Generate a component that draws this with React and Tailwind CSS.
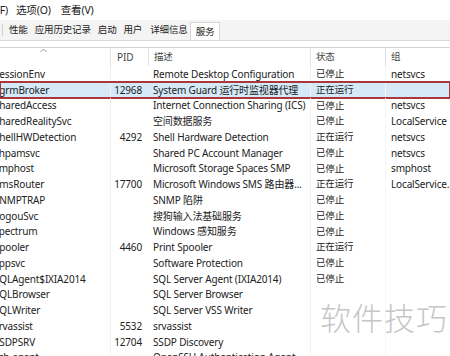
import React from "react";

const rows = [
  ["SessionEnv", "", "Remote Desktop Configuration", "已停止", "netsvcs"],
  ["SgrmBroker", "12968", "System Guard 运行时监视器代理", "正在运行", ""],
  ["SharedAccess", "", "Internet Connection Sharing (ICS)", "已停止", "netsvcs"],
  ["SharedRealitySvc", "", "空间数据服务", "已停止", "LocalService"],
  ["ShellHWDetection", "4292", "Shell Hardware Detection", "正在运行", "netsvcs"],
  ["shpamsvc", "", "Shared PC Account Manager", "已停止", "netsvcs"],
  ["smphost", "", "Microsoft Storage Spaces SMP", "已停止", "smphost"],
  ["SmsRouter", "17700", "Microsoft Windows SMS 路由器...", "正在运行", "LocalService..."],
  ["SNMPTRAP", "", "SNMP 陷阱", "已停止", ""],
  ["SogouSvc", "", "搜狗输入法基础服务", "已停止", ""],
  ["spectrum", "", "Windows 感知服务", "已停止", ""],
  ["Spooler", "4460", "Print Spooler", "正在运行", ""],
  ["sppsvc", "", "Software Protection", "已停止", ""],
  ["SQLAgent$IXIA2014", "", "SQL Server Agent (IXIA2014)", "已停止", ""],
  ["SQLBrowser", "", "SQL Server Browser", "", ""],
  ["SQLWriter", "", "SQL Server VSS Writer", "", ""],
  ["srvassist", "5532", "srvassist", "", ""],
  ["SSDPSRV", "12704", "SSDP Discovery", "", ""],
  ["ssh-agent", "", "OpenSSH Authentication Agent", "", ""],
];

const font = { fontFamily: '"Noto Sans", "Noto Sans CJK SC", sans-serif' };

export default function App() {
  return (
    <div
      className="relative w-[450px] h-[356px] overflow-hidden bg-white text-[10px] tracking-[-0.15px] text-[#222] leading-none"
      style={font}
    >
      {/* menu bar */}
      <div className="h-[20px] flex items-center overflow-hidden whitespace-nowrap text-[10.5px]">
        <span className="ml-[-24px]">文件(F)</span>
        <span className="ml-[8px]">选项(O)</span>
        <span className="ml-[10px]">查看(V)</span>
      </div>
      {/* tabs */}
      <div className="h-[21px] flex items-center bg-[#f4f4f4] border-b border-[#dadada] whitespace-nowrap text-[9.5px]">
        <span className="w-[1px] h-[12px] bg-[#d0d0d0] ml-[2px]"></span>
        <span className="ml-[6px]">性能</span>
        <span className="ml-[7px]">应用历史记录</span>
        <span className="ml-[7px]">启动</span>
        <span className="ml-[7px]">用户</span>
        <span className="ml-[8px]">详细信息</span>
        <span className="ml-[2px] h-[18px] px-[5px] flex items-center bg-white border border-b-0 border-[#d6d6d6] self-end">服务</span>
      </div>
      <div className="h-[6px]"></div>
      {/* header */}
      <div className="grid grid-cols-[110px_38px_162px_75px_65px] h-[19px] border-t border-[#d4d4d4] items-center text-[#444] text-[9.5px]">
        <div className="relative h-full">
          <svg className="absolute left-[40px] top-[0px]" width="7" height="5" viewBox="0 0 7 5">
            <path d="M0.5 4 L3.5 1 L6.5 4" fill="none" stroke="#9a9a9a" strokeWidth="1" />
          </svg>
        </div>
        <div className="h-full flex items-center pl-[6px] border-l border-[#e2e2e2] text-[10px]">PID</div>
        <div className="h-full flex items-center pl-[5px] border-l border-[#e2e2e2]">描述</div>
        <div className="h-full flex items-center pl-[5px] border-l border-[#e2e2e2]">状态</div>
        <div className="h-full flex items-center pl-[5px] border-l border-[#e2e2e2]">组</div>
      </div>
      {/* rows */}
      <div className="flex flex-col">
        {rows.map((r, i) => {
          const sel = i === 1;
          return (
            <div
              key={i}
              className={
                "grid grid-cols-[110px_38px_162px_75px_65px] h-[15.75px] shrink-0 items-center whitespace-nowrap " +
                (sel ? "bg-[#d5e9f8] outline-2 outline-[#a8383b] -outline-offset-1" : "")
              }
            >
              <div className="overflow-hidden h-full flex items-center">
                <span className="ml-[-6px]">{r[0]}</span>
              </div>
              <div className="h-full flex items-center justify-end pr-[6px] border-l border-[#f1f1f1]">{r[1]}</div>
              <div className="h-full flex items-center pl-[5px] overflow-hidden">{r[2]}</div>
              <div className="h-full flex items-center pl-[5px] border-l border-[#f1f1f1] text-[9.5px]">{r[3]}</div>
              <div className="h-full flex items-center pl-[5px] overflow-hidden border-l border-[#f6f6f6]">{r[4]}</div>
            </div>
          );
        })}
      </div>
      {/* watermark */}
      <div className="absolute left-[310px] top-[289px] w-[140px] h-[67px] flex items-start pointer-events-none">
        <span
          className="mt-[12px] ml-[10px] text-[31px] tracking-[1px] text-[#c6c6c6] font-light"
          style={{ fontFamily: '"Noto Sans CJK SC", sans-serif' }}
        >
          软件技巧
        </span>
      </div>
    </div>
  );
}
